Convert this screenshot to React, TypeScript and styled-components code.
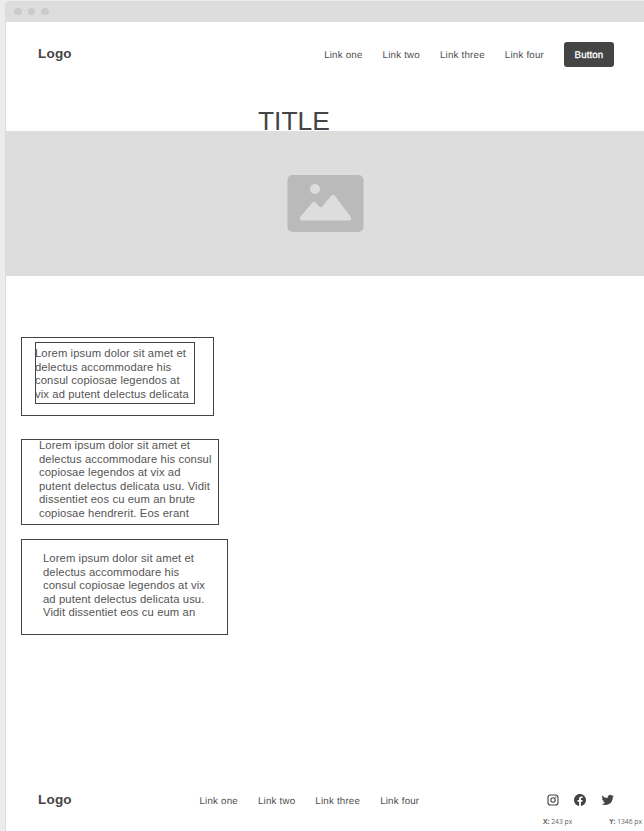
import React from "react";
import styled, { createGlobalStyle } from "styled-components";

const GlobalStyle = createGlobalStyle`
  * { box-sizing: border-box; }
  body {
    margin: 0;
    background: #ececec;
    color: #444;
    font-family: "Liberation Sans", Arial, sans-serif;
    overflow: hidden;
  }
`;

const Canvas = styled.div`
  height: 831px;
  padding: 1px 0 0 5px;
  overflow: hidden;
`;

const BrowserWindow = styled.div`
  display: flex;
  flex-direction: column;
  height: 830px;
  background: #fff;
  border-left: 1px solid #ddd;
  border-top-left-radius: 4px;
  overflow: hidden;
`;

const TitleBar = styled.div`
  display: flex;
  flex: none;
  gap: 6px;
  height: 21px;
  padding: 7px 0 0 8px;
  background: #ddd;
`;

const Dot = styled.span`
  width: 7.5px;
  height: 7px;
  border-radius: 50%;
  background: #cacaca;
`;

const Header = styled.header`
  display: flex;
  flex: none;
  align-items: center;
  justify-content: space-between;
  height: 65px;
  padding: 0 30px 0 32px;
`;

const Logo = styled.div`
  font-size: 13.5px;
  font-weight: 700;
  line-height: 16px;
  letter-spacing: 0.2px;
  padding-bottom: 2px;
`;

const Nav = styled.nav`
  display: flex;
  align-items: center;
  gap: 20px;
`;

const NavLink = styled.a`
  padding-top: 3px;
  font-size: 9.75px;
  line-height: 12px;
  letter-spacing: 0.2px;
  text-rendering: geometricPrecision;
  white-space: nowrap;
  color: #505050;
`;

const Button = styled.button`
  width: 50px;
  height: 25px;
  padding: 3px 0 0;
  border: 0;
  border-radius: 3px;
  background: #444;
  color: #fff;
  font: 9.75px/12px "Liberation Sans", Arial, sans-serif;
  letter-spacing: 0.1px;
  text-rendering: geometricPrecision;
  -webkit-text-stroke: 0.3px #fff;
`;

const Title = styled.h1`
  flex: none;
  height: 44px;
  margin: 0;
  padding: 19px 0 0 252px;
  font-size: 26.4px;
  font-weight: 400;
  line-height: 30px;
`;

const Hero = styled.section`
  display: flex;
  flex: none;
  align-items: center;
  justify-content: center;
  height: 145px;
  background: #ddd;
`;

const Content = styled.main`
  display: flex;
  flex-direction: column;
  flex: 1;
  align-items: flex-start;
  padding: 61px 0 0 15px;
`;

const Card = styled.article<{ $w: number; $h: number; $pad: string; $gap: number }>`
  width: ${(p) => p.$w}px;
  height: ${(p) => p.$h}px;
  padding: ${(p) => p.$pad};
  margin-bottom: ${(p) => p.$gap}px;
  border: 1px solid #444;
`;

const InnerCard = styled.div`
  width: 160px;
  height: 62px;
  padding-top: 4px;
  border: 1px solid #444;
`;

const Copy = styled.p<{ $left?: number; $top?: number }>`
  margin: ${(p) => p.$top ?? 0}px 0 0 ${(p) => p.$left ?? 0}px;
  color: #555;
  font-size: 11.25px;
  line-height: 13.5px;
  letter-spacing: 0.1px;
  white-space: pre;
`;

const Footer = styled.footer`
  display: flex;
  flex: none;
  align-items: center;
  justify-content: space-between;
  height: 26px;
  padding: 1px 30px 0 32px;
`;

const Socials = styled.div`
  display: flex;
  align-items: center;
  gap: 15px;
  padding-bottom: 1px;
`;

const Coordinates = styled.div`
  display: flex;
  flex: none;
  justify-content: flex-end;
  gap: 37px;
  height: 18px;
  padding: 4px 2px 0 0;
  color: #666;
  font: 6.75px/9px "Open Sans", "Noto Sans", sans-serif;
`;

const PictureIcon = () => (
  <svg width="77" height="57" viewBox="0 0 77 57">
    <rect x="0.500" width="76" height="57" rx="5" fill="#bababa" />
    <circle cx="28" cy="14" r="5" fill="#ddd" />
    <path
      d="M13.500 41.500 25.500 27.500q1.500-1.700 3 0l4.300 4.400q1 .9 2 0L44 21q2-2.500 4 0L63.500 41.500q2 4-2 4H16q-4.500 0-2.500-4Z"
      fill="#ddd"
    />
  </svg>
);

const InstagramIcon = () => (
  <svg width="12" height="12" viewBox="0 0 12 12" fill="none" stroke="#444">
    <rect x="1" y="1" width="10" height="10" rx="2.600" strokeWidth="1.100" />
    <circle cx="6" cy="6" r="2.200" strokeWidth="1.100" />
    <circle cx="8.800" cy="3.200" r=".65" fill="#444" stroke="none" />
  </svg>
);

const FacebookIcon = () => (
  <svg width="12" height="12" viewBox="0 0 24 24" fill="#444">
    <path d="M24 12.073C24 5.446 18.627.073 12 .073S0 5.446 0 12.073c0 5.990 4.388 10.954 10.125 11.854v-8.385H7.078v-3.469h3.047V9.430c0-3.007 1.792-4.669 4.533-4.669 1.312 0 2.686.235 2.686.235v2.953h-1.514c-1.491 0-1.956.925-1.956 1.874v2.250h3.328l-.532 3.469h-2.796v8.385C19.612 23.027 24 18.062 24 12.073Z" />
  </svg>
);

const TwitterIcon = () => (
  <svg width="13" height="12" viewBox="-1 0 25 22" fill="#444">
    <path d="M23.950 3.570a10 10 0 0 1-2.820.775 4.960 4.960 0 0 0 2.160-2.723 9.990 9.990 0 0 1-3.120 1.184 4.920 4.920 0 0 0-8.380 4.482A13.940 13.940 0 0 1 1.640 2.160a4.820 4.820 0 0 0-.665 2.475 4.920 4.920 0 0 0 2.190 4.096 4.900 4.900 0 0 1-2.230-.616v.06a4.920 4.920 0 0 0 3.950 4.827 5 5 0 0 1-2.210.085 4.940 4.940 0 0 0 4.600 3.419A9.870 9.870 0 0 1 0 18.540a13.990 13.990 0 0 0 7.550 2.209c9.050 0 14-7.497 14-13.987 0-.21 0-.42-.015-.63a9.940 9.940 0 0 0 2.460-2.548Z" />
  </svg>
);

const links = ["Link one", "Link two", "Link three", "Link four"];

export default function App() {
  return (
    <>
      <GlobalStyle />
      <Canvas>
        <BrowserWindow>
          <TitleBar>
            <Dot />
            <Dot />
            <Dot />
          </TitleBar>
          <Header>
            <Logo>Logo</Logo>
            <Nav>
              {links.map((l) => (
                <NavLink key={l}>{l}</NavLink>
              ))}
              <Button>Button</Button>
            </Nav>
          </Header>
          <Title>TITLE</Title>
          <Hero>
            <PictureIcon />
          </Hero>
          <Content>
            <Card $w={193} $h={79} $pad="4px 0 0 13px" $gap={23}>
              <InnerCard>
                <Copy $left={-1}>
                  {"Lorem ipsum dolor sit amet et\ndelectus accommodare his\nconsul copiosae legendos at\nvix ad putent delectus delicata"}
                </Copy>
              </InnerCard>
            </Card>
            <Card $w={198} $h={86} $pad="0 0 0 17px" $gap={14}>
              <Copy $top={-1}>
                {"Lorem ipsum dolor sit amet et\ndelectus accommodare his consul\ncopiosae legendos at vix ad\nputent delectus delicata usu. Vidit\ndissentiet eos cu eum an brute\ncopiosae hendrerit. Eos erant"}
              </Copy>
            </Card>
            <Card $w={207} $h={96} $pad="12px 0 0 21px" $gap={0}>
              <Copy>
                {"Lorem ipsum dolor sit amet et\ndelectus accommodare his\nconsul copiosae legendos at vix\nad putent delectus delicata usu.\nVidit dissentiet eos cu eum an"}
              </Copy>
            </Card>
          </Content>
          <Footer>
            <Logo>Logo</Logo>
            <Nav>
              {links.map((l) => (
                <NavLink key={l}>{l}</NavLink>
              ))}
            </Nav>
            <Socials>
              <InstagramIcon />
              <FacebookIcon />
              <TwitterIcon />
            </Socials>
          </Footer>
          <Coordinates>
            <span><b>X:</b> 243 px</span>
            <span><b>Y:</b> 1346 px</span>
          </Coordinates>
        </BrowserWindow>
      </Canvas>
    </>
  );
}
